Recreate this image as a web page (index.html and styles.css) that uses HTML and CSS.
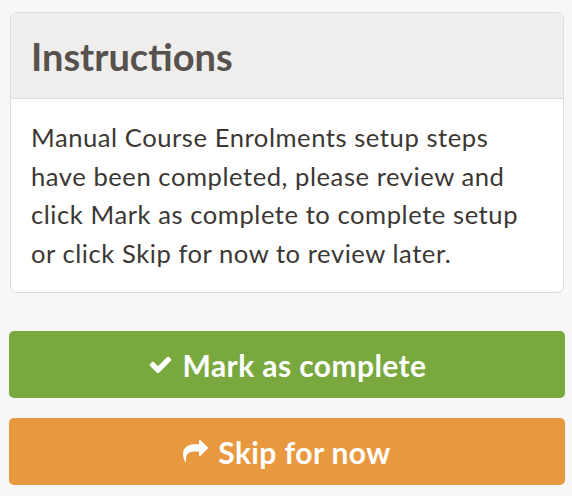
FILE: index.html
```html
<!DOCTYPE html>
<html lang="en">
<head>
<meta charset="utf-8">
<title>Instructions</title>
<link rel="stylesheet" href="styles.css">
</head>
<body>
<div class="page">
  <section class="card">
    <header class="card-header">
      <h3 class="card-title">Instructions</h3>
    </header>
    <div class="card-body">
      <p class="card-text">Manual Course Enrolments setup steps have been completed, please review and click Mark as complete to complete setup or click Skip for now to review later.</p>
    </div>
  </section>
  <div class="actions">
    <button class="btn btn-success" type="button">
      <svg class="icon icon-check" viewBox="0 0 1792 1792" aria-hidden="true"><path d="M1671 566q0 40-28 68l-724 724-136 136q-28 28-68 28t-68-28l-136-136-362-362q-28-28-28-68t28-68l136-136q28-28 68-28t68 28l294 295 656-657q28-28 68-28t68 28l136 136q28 28 28 68z"/></svg>
      <span>Mark as complete</span>
    </button>
    <button class="btn btn-warning" type="button">
      <svg class="icon icon-share" viewBox="0 0 1792 1792" aria-hidden="true"><path d="M1792 640q0 26-19 45l-512 512q-19 19-45 19t-45-19-19-45v-256h-224q-98 0-175.5 6t-154 21.5-133 42.5-105.5 69.5-80 101-48.5 138.5-17.5 181q0 55 5 123 0 6 2.5 23.5t2.5 26.5q0 15-8.5 25t-23.5 10q-16 0-28-17-7-9-13-22t-13.5-30-10.5-24q-127-285-127-451 0-199 53-333 162-403 875-403h224v-256q0-26 19-45t45-19 45 19l512 512q19 19 19 45z"/></svg>
      <span>Skip for now</span>
    </button>
  </div>
</div>
</body>
</html>
```
FILE: styles.css
```css
html, body {
  margin: 0;
  padding: 0;
  background: #f7f7f7;
}
body {
  font-family: "Lato", "Open Sans", sans-serif;
  color: #3b3734;
}
.page {
  padding: 12px 7px 0 9px;
}
.card {
  margin: 0 1px;
  background: #fff;
  border: 1px solid #dddbd8;
  border-radius: 7px;
  overflow: hidden;
}
.card-header {
  height: 85px;
  display: flex;
  align-items: center;
  padding: 0 20px;
  background: #efeeec;
  border-bottom: 1px solid #dddbd8;
}
.card-title {
  margin: 0;
  font-size: 38px;
  font-weight: 700;
  color: #57524d;
}
.card-body {
  padding: 19px 18px 20px 20px;
}
.card-text {
  margin: 0;
  font-size: 25.6px;
  letter-spacing: 0.55px;
  line-height: 38.5px;
}
.actions {
  display: flex;
  flex-direction: column;
  gap: 20px;
  margin-top: 38px;
}
.btn {
  display: flex;
  align-items: center;
  justify-content: center;
  gap: 10px;
  height: 67px;
  border: 0;
  border-radius: 5px;
  color: #fff;
  font-family: "Lato", "Open Sans", sans-serif;
  font-size: 30px;
  letter-spacing: 0.4px;
  font-weight: 700;
}
.btn-success { background: #79a83f; }
.btn-warning { background: #e8983e; }
.icon {
  width: 25px;
  height: 25px;
  fill: #fff;
}
```
